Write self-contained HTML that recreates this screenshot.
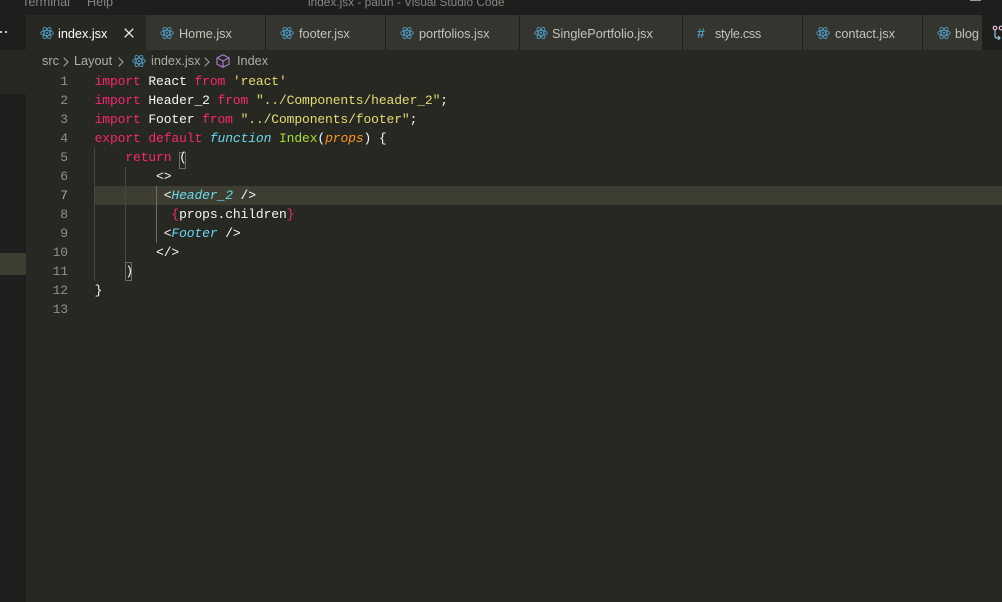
<!DOCTYPE html>
<html><head><meta charset="utf-8"><style>
html,body{margin:0;padding:0;background:#272822}
#r{position:relative;width:1002px;height:602px;overflow:hidden;background:#272822;font-family:"Liberation Sans",sans-serif}
.a{position:absolute}
.t{position:absolute;white-space:pre;font-size:12.7px;line-height:20px;color:#c3c3bb}
.tab{position:absolute;top:15px;height:35px;background:#34352f;border-right:1px solid #1e1f1c;box-sizing:border-box}
.ln{position:absolute;left:40px;width:28px;text-align:right;font:13px/19px "Liberation Mono",monospace;letter-spacing:-.1px;color:#8f908a}
.c{position:absolute;left:94.6px;white-space:pre;font:13px/19px "Liberation Mono",monospace;letter-spacing:-.12px;color:#f8f8f2}
.k{color:#f92672}.s{color:#e6db74}.f{color:#66d9ef;font-style:italic}.g{color:#a6e22e}.o{color:#fd971f;font-style:italic}
.gd{position:absolute;width:1px;background:#464741}
svg{position:absolute}
</style></head><body><div id="r">
<svg width="0" height="0" style="position:absolute"><defs>
<g id="at" fill="none" stroke="#4d90b8" stroke-width="1"><ellipse cx="7" cy="7" rx="6.3" ry="2.6"/><ellipse cx="7" cy="7" rx="6.3" ry="2.6" transform="rotate(60 7 7)"/><ellipse cx="7" cy="7" rx="6.3" ry="2.6" transform="rotate(120 7 7)"/><circle cx="7" cy="7" r="1.1" fill="#4d90b8" stroke="none"/></g>
</defs></svg>

<div class="a" style="left:0;top:0;width:1002px;height:15px;background:#1e1f1c"></div>
<div class="t" style="left:22px;top:-8px;color:#85857f">Terminal</div>
<div class="t" style="left:87px;top:-8px;color:#85857f">Help</div>
<div class="t" style="left:308px;top:-8px;color:#85857f;font-size:11.85px">index.jsx - palun - Visual Studio Code</div>
<div class="a" style="left:970px;top:0;width:11px;height:1px;background:#9a9a96"></div>

<div class="a" style="left:0;top:15px;width:26px;height:587px;background:#1e1f1c"></div>
<div class="a" style="left:0;top:50px;width:26px;height:44px;background:#272822"></div>
<div class="a" style="left:0;top:253px;width:26px;height:22px;background:#3e3d32"></div>
<div class="a" style="left:0;top:31px;width:2px;height:2px;background:#c8c8c2"></div>
<div class="a" style="left:5px;top:31px;width:2px;height:2px;background:#c8c8c2"></div>

<div class="tab" style="left:26px;width:120px;background:#272822;border-right:0"></div>
<div class="tab" style="left:146px;width:120px"></div>
<div class="tab" style="left:266px;width:120px"></div>
<div class="tab" style="left:386px;width:134px"></div>
<div class="tab" style="left:520px;width:163px"></div>
<div class="tab" style="left:683px;width:120px"></div>
<div class="tab" style="left:803px;width:120px"></div>
<div class="tab" style="left:923px;width:60px;border-right:0"></div>
<div class="a" style="left:982px;top:15px;width:20px;height:35px;background:#1e1f1c"></div>

<svg style="left:40px;top:26px" width="14" height="14"><use href="#at"/></svg>
<svg style="left:160px;top:26px" width="14" height="14"><use href="#at"/></svg>
<svg style="left:280px;top:26px" width="14" height="14"><use href="#at"/></svg>
<svg style="left:400px;top:26px" width="14" height="14"><use href="#at"/></svg>
<svg style="left:534px;top:26px" width="14" height="14"><use href="#at"/></svg>
<svg style="left:816px;top:26px" width="14" height="14"><use href="#at"/></svg>
<svg style="left:937px;top:26px" width="14" height="14"><use href="#at"/></svg>

<div class="t" style="left:58px;top:23.5px;color:#fff">index.jsx</div>
<svg style="left:124px;top:28px" width="10" height="10"><path d="M.7.7 9.3 9.3M9.3.7.7 9.3" stroke="#f0f0f0" stroke-width="1.3" fill="none"/></svg>
<div class="t" style="left:179px;top:23.5px">Home.jsx</div>
<div class="t" style="left:299px;top:23.5px">footer.jsx</div>
<div class="t" style="left:419px;top:23.5px">portfolios.jsx</div>
<div class="t" style="left:552px;top:23.5px">SinglePortfolio.jsx</div>
<div class="t" style="left:697px;top:23px;color:#519aba;font-weight:bold;font-size:14px">#</div>
<div class="t" style="left:715px;top:23.5px;letter-spacing:-.3px">style.css</div>
<div class="t" style="left:835px;top:23.5px">contact.jsx</div>
<div class="t" style="left:955px;top:23.5px">blog</div>

<svg style="left:992px;top:25px" width="10" height="16" fill="none" stroke="#d8d8d8" stroke-width="1.2"><circle cx="3" cy="3" r="1.8" stroke="#e8b8d8"/><circle cx="9" cy="3" r="1.8" stroke="#e8b8d8"/><path d="M3 5v6q0 2 2 2h3" stroke="#8fc8e8"/><path d="M6 11l2 2-2 2" stroke="#8fc8e8"/></svg>

<div class="t" style="left:42px;top:51px;color:#aeaea8">src</div>
<svg style="left:63px;top:57px" width="6" height="10"><path d="M.7.7 5 5 .7 9.3" stroke="#b0b0aa" fill="none"/></svg>
<div class="t" style="left:74px;top:51px;color:#aeaea8">Layout</div>
<svg style="left:118px;top:57px" width="6" height="10"><path d="M.7.7 5 5 .7 9.3" stroke="#b0b0aa" fill="none"/></svg>
<svg style="left:132px;top:54px" width="14" height="14"><use href="#at"/></svg>
<div class="t" style="left:151px;top:51px;color:#aeaea8">index.jsx</div>
<svg style="left:204px;top:57px" width="6" height="10"><path d="M.7.7 5 5 .7 9.3" stroke="#b0b0aa" fill="none"/></svg>
<svg style="left:216px;top:54px" width="14" height="14" fill="none" stroke="#b180d7" stroke-width="1.1"><path d="M7 .8 13 3.8V10.2L7 13.2 1 10.2V3.8ZM1 3.8 7 7 13 3.8M7 7V13.2"/></svg>
<div class="t" style="left:237px;top:51px;color:#aeaea8">Index</div>

<div class="a" style="left:94px;top:186px;width:908px;height:19px;background:#3e3d32"></div>

<div class="gd" style="left:94px;top:148px;height:133px"></div>
<div class="gd" style="left:125px;top:167px;height:95px"></div>
<div class="gd" style="left:156px;top:186px;height:57px;background:#6e6e66"></div>

<div class="a" style="left:179px;top:152px;width:5px;height:15px;border:1px solid #6e6e66"></div>
<div class="a" style="left:125px;top:262px;width:5px;height:17px;border:1px solid #6e6e66"></div>

<div class="ln" style="top:72px">1</div>
<div class="ln" style="top:91px">2</div>
<div class="ln" style="top:110px">3</div>
<div class="ln" style="top:129px">4</div>
<div class="ln" style="top:148px">5</div>
<div class="ln" style="top:167px">6</div>
<div class="ln" style="top:186px;color:#a8a89e">7</div>
<div class="ln" style="top:205px">8</div>
<div class="ln" style="top:224px">9</div>
<div class="ln" style="top:243px">10</div>
<div class="ln" style="top:262px">11</div>
<div class="ln" style="top:281px">12</div>
<div class="ln" style="top:300px">13</div>

<div class="c" style="top:72px"><span class="k">import</span> React <span class="k">from</span> <span class="s">'react'</span></div>
<div class="c" style="top:91px"><span class="k">import</span> Header_2 <span class="k">from</span> <span class="s">"../Components/header_2"</span>;</div>
<div class="c" style="top:110px"><span class="k">import</span> Footer <span class="k">from</span> <span class="s">"../Components/footer"</span>;</div>
<div class="c" style="top:129px"><span class="k">export</span> <span class="k">default</span> <span class="f">function</span> <span class="g">Index</span>(<span class="o">props</span>) {</div>
<div class="c" style="top:148px">    <span class="k">return</span> (</div>
<div class="c" style="top:167px">        &lt;&gt;</div>
<div class="c" style="top:186px">         &lt;<span class="f">Header_2</span> /&gt;</div>
<div class="c" style="top:205px">          <span class="k">{</span>props.children<span class="k">}</span></div>
<div class="c" style="top:224px">         &lt;<span class="f">Footer</span> /&gt;</div>
<div class="c" style="top:243px">        &lt;/&gt;</div>
<div class="c" style="top:262px">    )</div>
<div class="c" style="top:281px">}</div>
</div></body></html>
